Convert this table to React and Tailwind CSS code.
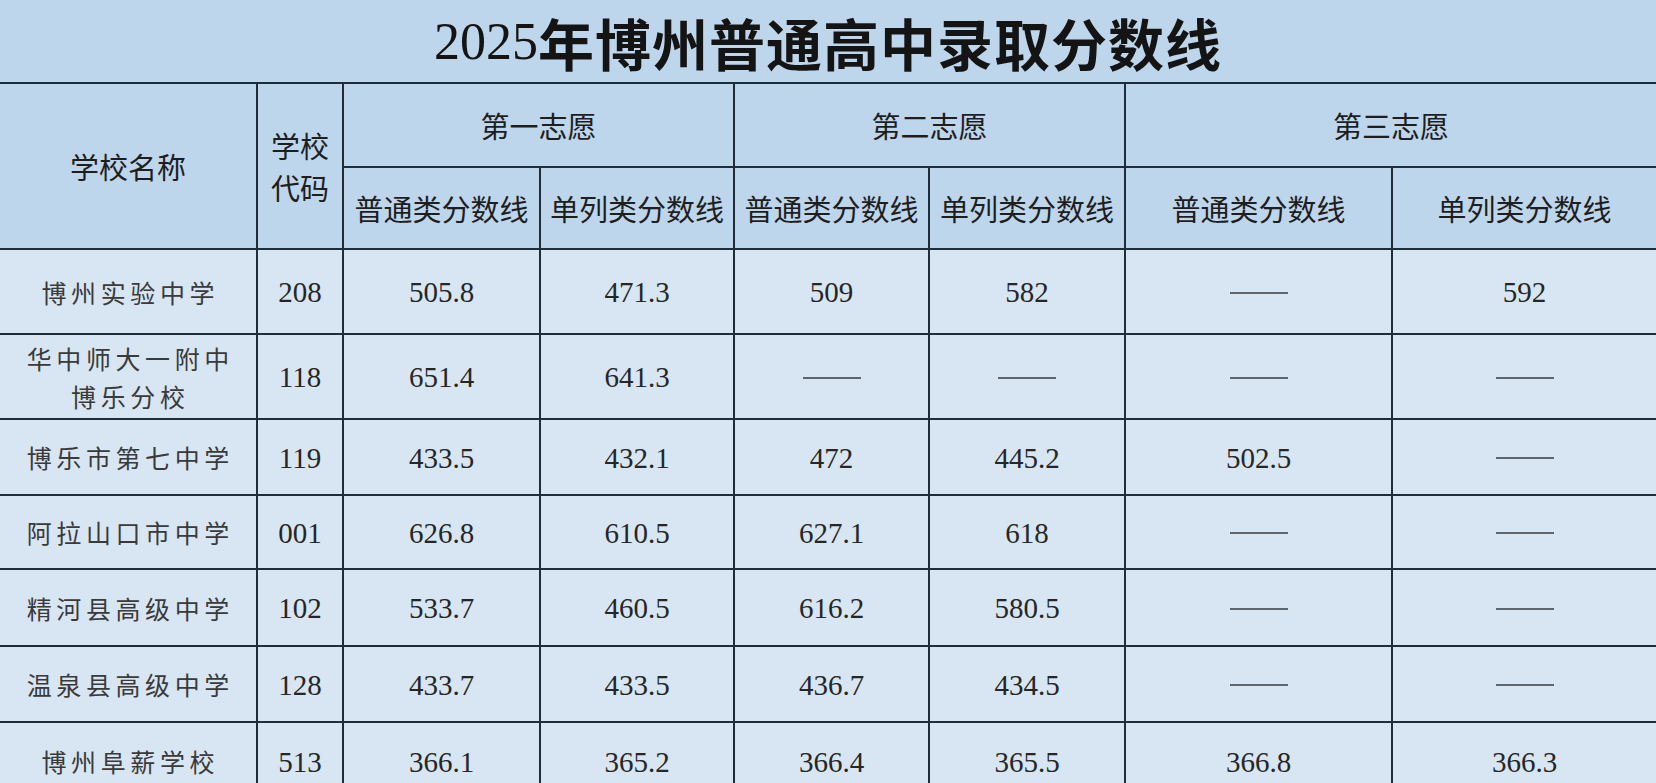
import React from "react";

const cjkSans = { fontFamily: '"Noto Sans CJK SC", "Noto Sans", sans-serif' };

const rows = [
  { name: ["博州实验中学"], code: "208", v: ["505.8", "471.3", "509", "582", "—", "592"] },
  { name: ["华中师大一附中", "博乐分校"], code: "118", v: ["651.4", "641.3", "—", "—", "—", "—"] },
  { name: ["博乐市第七中学"], code: "119", v: ["433.5", "432.1", "472", "445.2", "502.5", "—"] },
  { name: ["阿拉山口市中学"], code: "001", v: ["626.8", "610.5", "627.1", "618", "—", "—"] },
  { name: ["精河县高级中学"], code: "102", v: ["533.7", "460.5", "616.2", "580.5", "—", "—"] },
  { name: ["温泉县高级中学"], code: "128", v: ["433.7", "433.5", "436.7", "434.5", "—", "—"] },
  { name: ["博州阜薪学校"], code: "513", v: ["366.1", "365.2", "366.4", "365.5", "366.8", "366.3"] },
];

function HeadCell({ className = "", children }) {
  return (
    <div
      className={`bg-[#bed6ec] flex flex-col items-center justify-center text-[29px] leading-[42px] text-[#1e1e1e] font-[family-name:'Noto_Sans_CJK_SC',sans-serif] ${className}`}
    >
      {children}
    </div>
  );
}

function DataCell({ children, className = "" }) {
  return (
    <div className={`bg-[#d8e6f3] flex flex-col items-center justify-center ${className}`}>
      {children}
    </div>
  );
}

function Num({ value }) {
  if (value === "—") {
    return <div className="w-[58px] h-[2px] bg-[#5f656d] mt-[2px]" />;
  }
  return (
    <span className="font-['Liberation_Serif',serif] text-[29px] leading-none text-[#262626] pt-[2px]">
      {value}
    </span>
  );
}

export default function App() {
  return (
    <div className="w-[1656px] h-[783px] overflow-hidden bg-[#bed6ec]">
      <div className="h-[82px] flex items-center justify-center text-[#141414] pt-[2px]">
        <span className="font-['Liberation_Serif',serif] text-[52px] leading-none">2025</span>
        <span
          className="font-bold text-[56px] leading-none tracking-[1px]"
          style={cjkSans}
        >
          年博州普通高中录取分数线
        </span>
      </div>
      <div className="grid grid-cols-[256px_84px_195px_192px_193px_194px_265px_263px] grid-rows-[82px_80px_83px_83px_74px_72px_75px_74px_76px] gap-[2px] bg-[#1f2c3b] border-t-2 border-[#1f2c3b]">
        <HeadCell className="row-span-2">学校名称</HeadCell>
        <HeadCell className="row-span-2">
          <span>学校</span>
          <span>代码</span>
        </HeadCell>
        <HeadCell className="col-span-2">第一志愿</HeadCell>
        <HeadCell className="col-span-2">第二志愿</HeadCell>
        <HeadCell className="col-span-2">第三志愿</HeadCell>
        <HeadCell>普通类分数线</HeadCell>
        <HeadCell>单列类分数线</HeadCell>
        <HeadCell>普通类分数线</HeadCell>
        <HeadCell>单列类分数线</HeadCell>
        <HeadCell>普通类分数线</HeadCell>
        <HeadCell>单列类分数线</HeadCell>
        {rows.map((r, i) => (
          <React.Fragment key={i}>
            <DataCell>
              {r.name.map((n, j) => (
                <span
                  key={j}
                  className="text-[25px] leading-[38px] tracking-[4.6px] pl-[4.6px] text-[#3a3a3a] font-['Noto_Sans_CJK_SC',sans-serif]"
                >
                  {n}
                </span>
              ))}
            </DataCell>
            <DataCell>
              <Num value={r.code} />
            </DataCell>
            {r.v.map((v, k) => (
              <DataCell key={k}>
                <Num value={v} />
              </DataCell>
            ))}
          </React.Fragment>
        ))}
      </div>
    </div>
  );
}
